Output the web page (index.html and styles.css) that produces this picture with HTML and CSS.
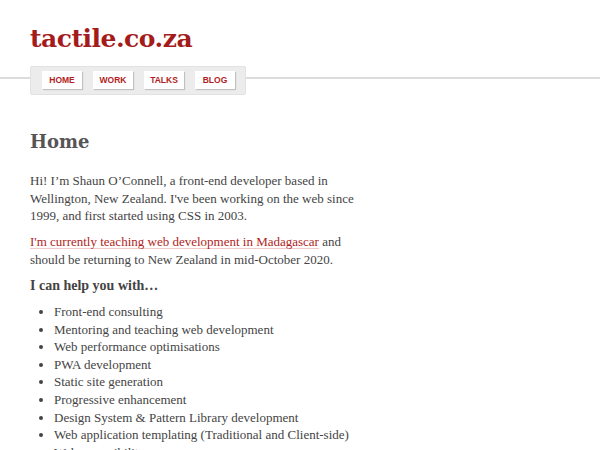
FILE: index.html
```html
<!DOCTYPE html>
<html lang="en">
<head>
<meta charset="utf-8">
<title>tactile.co.za</title>
<link rel="stylesheet" href="styles.css">
</head>
<body>
<header class="masthead">
  <h1 class="site-title">tactile.co.za</h1>
  <div class="nav-rule">
    <nav class="nav">
      <a class="nav-btn" href="#">Home</a>
      <a class="nav-btn" href="#">Work</a>
      <a class="nav-btn" href="#">Talks</a>
      <a class="nav-btn" href="#">Blog</a>
    </nav>
  </div>
</header>
<main class="content">
  <h2 class="page-title">Home</h2>
  <p>Hi! I’m Shaun O’Connell, a front-end developer based in Wellington, New Zealand. I've been working on the web since 1999, and first started using CSS in 2003.</p>
  <p><a class="link" href="#">I'm currently teaching web development in Madagascar</a> and should be returning to New Zealand in mid-October 2020.</p>
  <h3 class="sub-title">I can help you with…</h3>
  <ul class="help-list">
    <li>Front-end consulting</li>
    <li>Mentoring and teaching web development</li>
    <li>Web performance optimisations</li>
    <li>PWA development</li>
    <li>Static site generation</li>
    <li>Progressive enhancement</li>
    <li>Design System &amp; Pattern Library development</li>
    <li>Web application templating (Traditional and Client-side)</li>
    <li>Web accessibility</li>
  </ul>
</main>
</body>
</html>
```
FILE: styles.css
```css
html, body {
  margin: 0;
  padding: 0;
  background: #fff;
}
body {
  font-family: "Liberation Serif", "Times New Roman", serif;
  color: #444;
  font-size: 13px;
  line-height: 17.6px;
}
.masthead {
  padding-top: 22px;
}
.site-title {
  margin: 0 0 0 30px;
  font-family: "DejaVu Serif", Georgia, serif;
  font-size: 25px;
  line-height: 34px;
  font-weight: bold;
  color: #a41b1b;
  letter-spacing: -0.5px;
}
.nav-rule {
  margin-top: 10px;
  background: linear-gradient(to bottom, transparent 11px, #dcdcdc 11px, #dcdcdc 13px, transparent 13px);
}
.nav {
  margin-left: 30px;
  display: inline-flex;
  gap: 11px;
  padding: 4px 10px 5px 11px;
  background: #ececec;
  border: 1px solid #e2e2e2;
  border-radius: 2px;
}
.nav-btn {
  display: block;
  width: 40px;
  height: 18px;
  line-height: 18px;
  text-align: center;
  background: #fff;
  box-shadow: 1px 1px 1px rgba(0,0,0,0.18);
  font-family: "Liberation Sans", Arial, sans-serif;
  font-weight: bold;
  font-size: 8.5px;
  text-transform: uppercase;
  color: #b01e23;
  text-decoration: none;
}
.content {
  padding: 0 30px;
  width: 332px;
}
.page-title {
  margin: 35px 0 18px;
  font-family: "DejaVu Serif", Georgia, serif;
  font-size: 18px;
  line-height: 24px;
  color: #555;
}
p {
  margin: 0 0 8.5px;
}
.link {
  color: #b01e23;
  text-decoration: underline;
  text-decoration-color: #f0c8c8;
  text-underline-offset: 2px;
}
.sub-title {
  margin: 0 0 8.5px;
  font-size: 14px;
  line-height: 17.6px;
  font-weight: bold;
  color: #444;
}
.help-list {
  margin: 0;
  padding-left: 24px;
}
```
